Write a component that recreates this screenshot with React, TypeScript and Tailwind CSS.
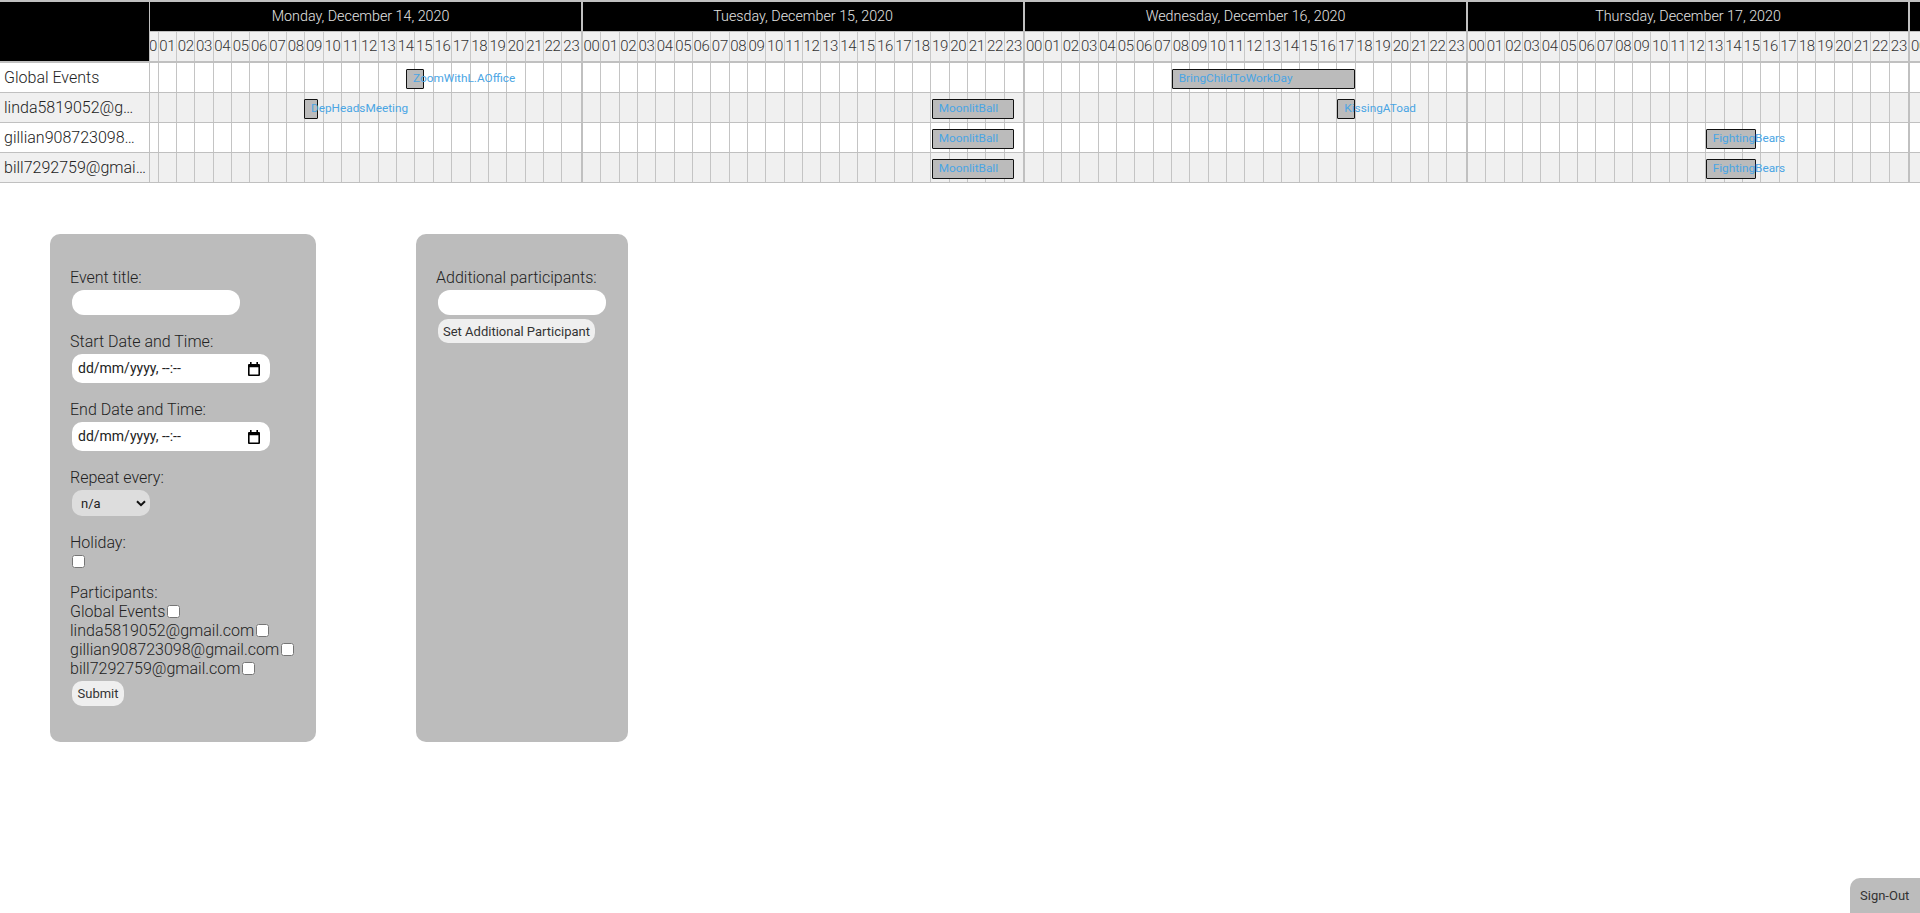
import React from "react";

const days = [
  "Monday, December 14, 2020",
  "Tuesday, December 15, 2020",
  "Wednesday, December 16, 2020",
  "Thursday, December 17, 2020",
  "Friday, December 18, 2020",
];

const hours = Array.from({ length: 24 }, (_, i) => String(i).padStart(2, "0"));

const people = [
  "Global Events",
  "linda5819052@gmail.com",
  "gillian908723098@gmail.com",
  "bill7292759@gmail.com",
];

type CalEvent = { row: number; title: string; left: number; width: number };

// left is px from the start of the first day column
const events: CalEvent[] = [
  { row: 0, title: "ZoomWithL.AOffice", left: 265.7, width: 18 },
  { row: 0, title: "BringChildToWorkDay", left: 1031.4, width: 183 },
  { row: 1, title: "DepHeadsMeeting", left: 163.7, width: 14 },
  { row: 1, title: "MoonlitBall", left: 791.4, width: 82 },
  { row: 1, title: "KissingAToad", left: 1197, width: 17.5 },
  { row: 2, title: "MoonlitBall", left: 791.4, width: 82 },
  { row: 2, title: "FightingBears", left: 1565.4, width: 50 },
  { row: 3, title: "MoonlitBall", left: 791.4, width: 82 },
  { row: 3, title: "FightingBears", left: 1565.4, width: 50 },
];

function CalendarIcon() {
  return (
    <svg width="12" height="14" viewBox="0 0 12 14">
      <path
        fillRule="evenodd"
        d="M2 0h1.6v2h4.8V0H10v2h1a1 1 0 0 1 1 1v10a1 1 0 0 1-1 1H1a1 1 0 0 1-1-1V3a1 1 0 0 1 1-1h1z M1.6 5.2v7.2h8.8V5.2z"
        fill="#000"
      />
    </svg>
  );
}

function Chevron() {
  return (
    <svg width="10" height="7" viewBox="0 0 10 7">
      <path d="M1 1.2l4 4 4-4" stroke="#111" strokeWidth="2" fill="none" />
    </svg>
  );
}

function Schedule() {
  return (
    <div className="flex border-t-2 border-[#c0c0c0]">
      {/* names column */}
      <div className="w-[150px] shrink-0 border-r border-[#c0c0c0]">
        <div className="h-[61px] bg-black border-b-2 border-[#c0c0c0]" />
        {people.map((p, i) => (
          <div
            key={p}
            className={`h-[30px] border-b border-[#c0c0c0] pl-[4px] pr-[2px] truncate leading-[29px] text-[16px] ${
              i % 2 ? "bg-[#f0f0f0]" : "bg-white"
            }`}
          >
            {p}
          </div>
        ))}
      </div>

      {/* scrolled grid */}
      <div className="flex-1 min-w-0 overflow-hidden">
        <div className="w-max ml-[-9.7px]">
          <div className="flex h-[30px] border-b border-[#c0c0c0]">
            {days.map((d) => (
              <div
                key={d}
                className="w-[442.5px] shrink-0 bg-black border-r-2 border-[#c0c0c0] flex items-center justify-center text-[14.3px] text-[#e4e4e4]"
              >
                {d}
              </div>
            ))}
          </div>
          <div className="flex h-[31px] border-b-2 border-[#c0c0c0]">
            {days.map((d) => (
              <div key={d} className="w-[442.5px] shrink-0 flex bg-[#f0f0f0] border-r-2 border-[#c0c0c0]">
                {hours.map((h) => (
                  <div
                    key={h}
                    className="w-[18.354px] shrink-0 border-r border-[#c8c8c8] last:border-r-0 flex items-center justify-center text-[15px] text-[#333] tracking-[-0.3px]"
                  >
                    {h}
                  </div>
                ))}
              </div>
            ))}
          </div>

          {people.map((p, i) => (
            <div
              key={p}
              className={`relative flex h-[30px] border-b border-[#c0c0c0] ${i % 2 ? "bg-[#f0f0f0]" : "bg-white"}`}
            >
              {days.map((d) => (
                <div key={d} className="w-[442.5px] shrink-0 flex border-r-2 border-[#c0c0c0]">
                  {hours.map((h) => (
                    <div key={h} className="w-[18.354px] shrink-0 border-r border-[#c4c4c4] last:border-r-0" />
                  ))}
                </div>
              ))}
              {events
                .filter((e) => e.row === i)
                .map((e) => (
                  <div
                    key={e.title + e.left}
                    className="absolute top-[6px] h-[20px] border border-[#111] bg-[#bbbbbb] rounded-[1px] flex items-center"
                    style={{ left: e.left, width: e.width }}
                  >
                    <span className="pl-[6px] whitespace-nowrap text-[11.8px] font-normal text-[#4aa5e4]">
                      {e.title}
                    </span>
                  </div>
                ))}
            </div>
          ))}
        </div>
      </div>
    </div>
  );
}

function DateField() {
  return (
    <div className="mt-[3px] ml-[2px] w-[198px] h-[29px] rounded-[10px] bg-white flex items-center justify-between pl-[6px] pr-[10px] text-[14px] font-normal text-[#222]">
      <span>dd/mm/yyyy, --:--</span>
      <CalendarIcon />
    </div>
  );
}

export default function App() {
  return (
    <div className="min-h-screen bg-white font-['Roboto',sans-serif] font-light text-[#222]">
      <Schedule />

      <div className="flex gap-[100px] pl-[50px] mt-[51px]">
        <div className="w-[266px] h-[508px] rounded-[10px] bg-[#bcbcbc] pt-[34px] pl-[20px] text-[16px] leading-[19px]">
          <div>Event title:</div>
          <input className="block mt-[3px] ml-[2px] w-[168px] h-[25px] rounded-[12px] bg-white outline-none" />

          <div className="mt-[17px]">Start Date and Time:</div>
          <DateField />

          <div className="mt-[17px]">End Date and Time:</div>
          <DateField />

          <div className="mt-[17px]">Repeat every:</div>
          <div className="mt-[3px] ml-[2px] w-[78px] h-[26px] rounded-[10px] bg-[#dddddd] flex items-center justify-between pl-[9px] pr-[4px] text-[13px] font-normal">
            <span>n/a</span>
            <Chevron />
          </div>

          <div className="mt-[17px]">Holiday:</div>
          <input type="checkbox" className="block mt-[3px] ml-[2px] w-[13px] h-[13px]" />

          <div className="mt-[15px]">Participants:</div>
          {people.map((p) => (
            <div key={p} className="flex items-center h-[19px]">
              <span>{p}</span>
              <input type="checkbox" className="ml-[2px] w-[13px] h-[13px]" />
            </div>
          ))}
          <button className="block mt-[3px] ml-[2px] h-[25px] px-[5.5px] rounded-[10px] bg-[#efefef] text-[13px] font-normal text-[#333]">
            Submit
          </button>
        </div>

        <div className="w-[212px] h-[508px] rounded-[10px] bg-[#bcbcbc] pt-[34px] pl-[20px] text-[16px] leading-[19px]">
          <div>Additional participants:</div>
          <input className="block mt-[3px] ml-[2px] w-[168px] h-[25px] rounded-[12px] bg-white outline-none" />
          <button className="block mt-[4px] ml-[2px] h-[24px] px-[5px] rounded-[10px] bg-[#efefef] text-[13px] font-normal text-[#333]">
            Set Additional Participant
          </button>
        </div>
      </div>

      <button className="fixed bottom-0 right-0 w-[70px] h-[35px] pl-[10px] text-left rounded-tl-[10px] bg-[#bcbcbc] text-[13px] font-normal text-[#333]">
        Sign-Out
      </button>
    </div>
  );
}
